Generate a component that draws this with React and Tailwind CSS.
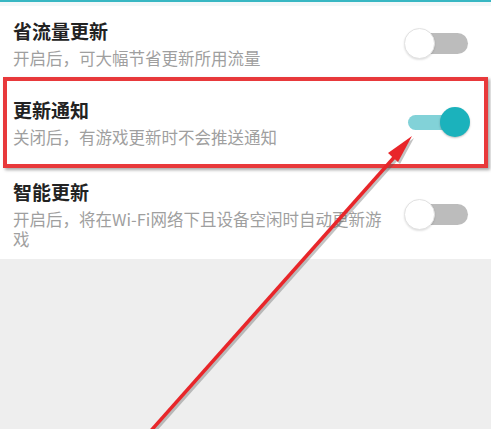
import React from "react";

function Toggle({ on }) {
  if (on) {
    return (
      <div className="relative w-[62px] h-[30px] shrink-0">
        <div className="absolute left-0 right-[6px] top-[8px] h-[15px] rounded-full bg-[#82d2d8]" />
        <div className="absolute right-0 top-0 w-[30px] h-[30px] rounded-full bg-[#1bb2bc] shadow-[0_1px_2px_rgba(0,0,0,0.25)]" />
      </div>
    );
  }
  return (
    <div className="relative w-[64px] h-[31px] shrink-0">
      <div className="absolute left-[8px] right-0 top-[5px] h-[21px] rounded-full bg-[#bcbcbc]" />
      <div className="absolute left-0 top-0 w-[31px] h-[31px] rounded-full bg-white border border-[#e2e2e2] shadow-[0_1px_2px_rgba(0,0,0,0.12)]" />
    </div>
  );
}

function Row({ title, desc, on, className }) {
  return (
    <div className={`flex items-center justify-between ${className}`}>
      <div className="max-w-[376px]">
        <div className="text-[19px] leading-[26px] font-bold text-[#222222]">{title}</div>
        <div className="mt-[4px] text-[16.5px] leading-[20px] text-[#9f9f9f]">{desc}</div>
      </div>
      <Toggle on={on} />
    </div>
  );
}

export default function App() {
  return (
    <div
      className="relative h-[429px] overflow-hidden bg-[#eeeeee]"
      style={{ fontFamily: '"Noto Sans CJK SC", "Noto Sans", sans-serif' }}
    >
      <div className="bg-white">
        <div className="h-[2px] bg-[#38b7c3]" />
        <div className="h-[4px] bg-[#f3f8f9]" />
        <Row
          title="省流量更新"
          desc="开启后，可大幅节省更新所用流量"
          on={false}
          className="pl-[13px] pr-[23px] pt-[12px] pb-[9px]"
        />
        <div className="mx-[3px] border-[4px] border-[#e8393b] shadow-[2px_2px_3px_rgba(0,0,0,0.35)]">
          <Row
            title="更新通知"
            desc="关闭后，有游戏更新时不会推送通知"
            on={true}
            className="pl-[6px] pr-[14px] pt-[16px] pb-[17px]"
          />
        </div>
        <Row
          title="智能更新"
          desc="开启后，将在Wi-Fi网络下且设备空闲时自动更新游戏"
          on={false}
          className="pl-[13px] pr-[23px] pt-[11px] pb-[10px]"
        />
      </div>

      <svg className="absolute inset-0 pointer-events-none" width="491" height="429" viewBox="0 0 491 429">
        <g opacity="0.35" transform="translate(2 2)">
          <line x1="148" y1="434" x2="398" y2="153" stroke="#555" strokeWidth="3.5" />
          <polygon points="412,136 398,162 388,153" fill="#555" />
        </g>
        <line x1="148" y1="434" x2="398" y2="153" stroke="#e8262a" strokeWidth="3.5" />
        <polygon points="412,136 398,162 388,153" fill="#e8262a" />
      </svg>
    </div>
  );
}
